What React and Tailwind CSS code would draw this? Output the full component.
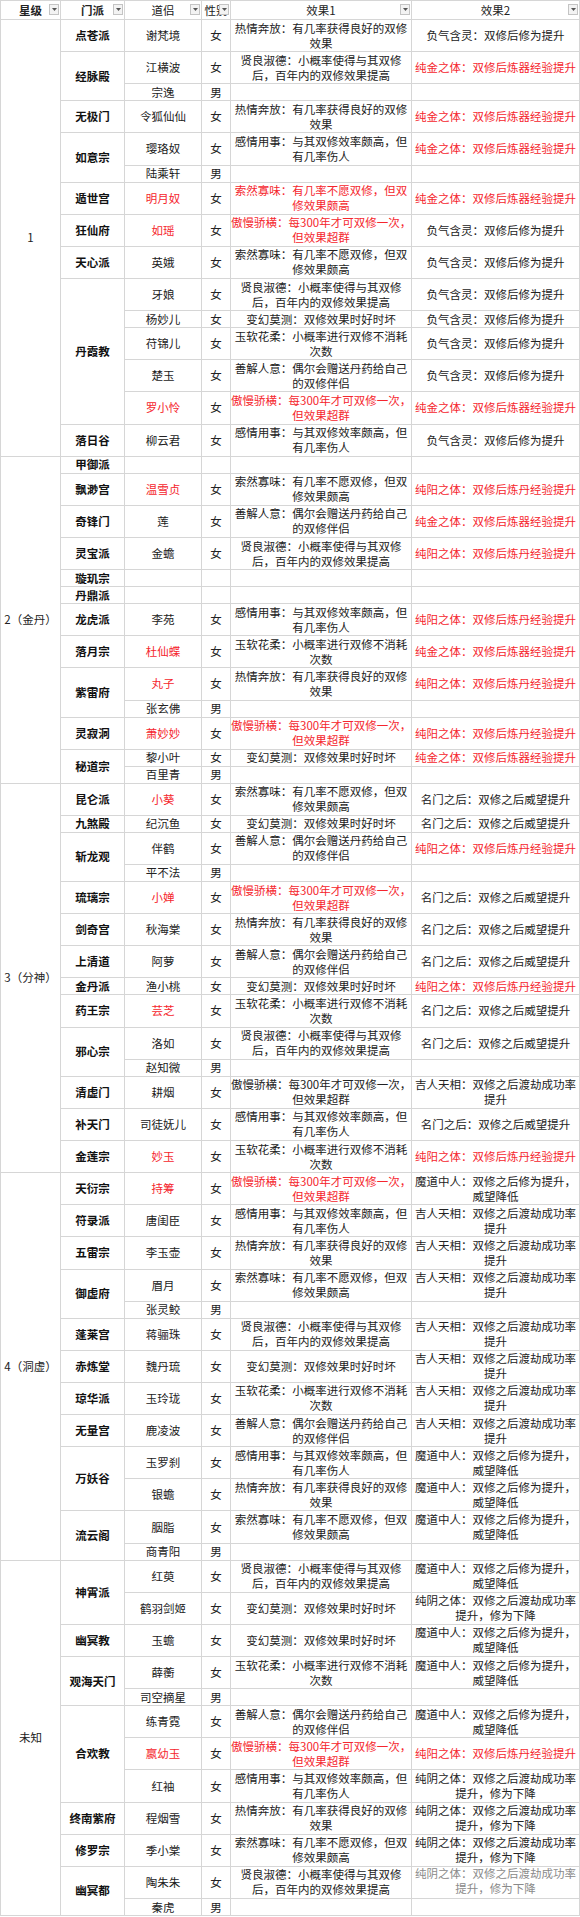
import React from 'react';

const E1 = {
  rq: ['热情奔放：有几率获得良好的双修', '效果'],
  xl: ['贤良淑德：小概率使得与其双修', '后，百年内的双修效果提高'],
  gq: ['感情用事：与其双修效率颇高，但', '有几率伤人'],
  sr: ['索然寡味：有几率不愿双修，但双', '修效果颇高'],
  am: ['傲慢骄横：每300年才可双修一次，', '但效果超群'],
  bh: ['变幻莫测：双修效果时好时坏'],
  yr: ['玉软花柔：小概率进行双修不消耗', '次数'],
  sj: ['善解人意：偶尔会赠送丹药给自己', '的双修伴侣'],
};
const E2 = {
  fq: { t: ['负气含灵：双修后修为提升'] },
  cj: { t: ['纯金之体：双修后炼器经验提升'], red: true },
  cy: { t: ['纯阳之体：双修后炼丹经验提升'], red: true },
  mm: { t: ['名门之后：双修之后威望提升'] },
  jr: { t: ['吉人天相：双修之后渡劫成功率', '提升'] },
  md: { t: ['魔道中人：双修之后修为提升，', '威望降低'] },
  cyin: { t: ['纯阴之体：双修之后渡劫成功率', '提升，修为下降'] },
};

const m = (n = '', g = '', e1 = null, e2 = null, f = '') => ({ n, g, e1, e2, f });

const TIERS = [
  {
    label: '1',
    sects: [
      ['点苍派', [m('谢梵境', '女', 'rq', 'fq')]],
      ['经脉殿', [m('江横波', '女', 'xl', 'cj'), m('宗逸', '男')]],
      ['无极门', [m('令狐仙仙', '女', 'rq', 'cj')]],
      ['如意宗', [m('璎珞奴', '女', 'gq', 'cj'), m('陆乘轩', '男')]],
      ['遁世宫', [m('明月奴', '女', 'sr', 'cj', 'ne')]],
      ['狂仙府', [m('如瑶', '女', 'am', 'fq', 'ne')]],
      ['天心派', [m('英娥', '女', 'sr', 'fq')]],
      ['丹霞教', [m('牙娘', '女', 'xl', 'fq'), m('杨妙儿', '女', 'bh', 'fq'), m('苻锦儿', '女', 'yr', 'fq'), m('楚玉', '女', 'sj', 'fq'), m('罗小怜', '女', 'am', 'cj', 'ne')]],
      ['落日谷', [m('柳云君', '女', 'gq', 'fq')]],
    ],
  },
  {
    label: '2（金丹）',
    sects: [
      ['甲御派', [m()]],
      ['飘渺宫', [m('温雪贞', '女', 'sr', 'cy', 'n')]],
      ['奇锋门', [m('莲', '女', 'sj', 'cj')]],
      ['灵宝派', [m('金蟾', '女', 'xl', 'cy')]],
      ['璇玑宗', [m()]],
      ['丹鼎派', [m()]],
      ['龙虎派', [m('李苑', '女', 'gq', 'cy')]],
      ['落月宗', [m('杜仙蝶', '女', 'yr', 'cj', 'n')]],
      ['紫雷府', [m('丸子', '女', 'rq', 'cy', 'n'), m('张玄佛', '男')]],
      ['灵寂洞', [m('萧妙妙', '女', 'am', 'cy', 'ne')]],
      ['秘道宗', [m('黎小叶', '女', 'bh', 'cj'), m('百里青', '男')]],
    ],
  },
  {
    label: '3（分神）',
    sects: [
      ['昆仑派', [m('小葵', '女', 'sr', 'mm', 'n')]],
      ['九煞殿', [m('纪沉鱼', '女', 'bh', 'mm')]],
      ['斩龙观', [m('伴鹤', '女', 'sj', 'cy'), m('平不法', '男')]],
      ['琉璃宗', [m('小婵', '女', 'am', 'mm', 'ne')]],
      ['剑奇宫', [m('秋海棠', '女', 'rq', 'mm')]],
      ['上清道', [m('阿萝', '女', 'sj', 'mm')]],
      ['金丹派', [m('渔小桃', '女', 'bh', 'cy')]],
      ['药王宗', [m('芸芝', '女', 'yr', 'mm', 'n')]],
      ['邪心宗', [m('洛如', '女', 'xl', 'mm'), m('赵知微', '男')]],
      ['清虚门', [m('耕烟', '女', 'am', 'jr')]],
      ['补天门', [m('司徒妩儿', '女', 'gq', 'mm')]],
      ['金莲宗', [m('妙玉', '女', 'yr', 'cy', 'n')]],
    ],
  },
  {
    label: '4（洞虚）',
    sects: [
      ['天衍宗', [m('持筹', '女', 'am', 'md', 'ne')]],
      ['符录派', [m('唐闺臣', '女', 'gq', 'jr')]],
      ['五雷宗', [m('李玉壶', '女', 'rq', 'jr')]],
      ['御虚府', [m('眉月', '女', 'sr', 'jr'), m('张灵鲛', '男')]],
      ['蓬莱宫', [m('蒋骊珠', '女', 'xl', 'jr')]],
      ['赤炼堂', [m('魏丹琉', '女', 'bh', 'jr')]],
      ['琼华派', [m('玉玲珑', '女', 'yr', 'jr')]],
      ['无量宫', [m('鹿凌波', '女', 'sj', 'jr')]],
      ['万妖谷', [m('玉罗刹', '女', 'gq', 'md'), m('银蟾', '女', 'rq', 'md')]],
      ['流云阁', [m('胭脂', '女', 'sr', 'md'), m('商青阳', '男')]],
    ],
  },
  {
    label: '未知',
    sects: [
      ['神霄派', [m('红萸', '女', 'xl', 'md'), m('鹤羽剑姬', '女', 'bh', 'cyin')]],
      ['幽冥教', [m('玉蟾', '女', 'bh', 'md')]],
      ['观海天门', [m('薛蘅', '女', 'yr', 'md'), m('司空摘星', '男')]],
      ['合欢教', [m('练青霓', '女', 'sj', 'md'), m('嬴幼玉', '女', 'am', 'cy', 'ne'), m('红袖', '女', 'gq', 'cyin')]],
      ['终南紫府', [m('程烟雪', '女', 'rq', 'cyin')]],
      ['修罗宗', [m('季小棠', '女', 'sr', 'cyin')]],
      ['幽冥都', [m('陶朱朱', '女', 'xl', 'cyin', 'g'), m('秦虎', '男')]],
    ],
  },
];

const RED = 'text-[#f5262d]';
const CELL = 'border border-[#d6d6d6] p-0 text-center align-middle whitespace-nowrap overflow-hidden leading-[15px]';

function Filter() {
  return (
    <span className="absolute right-[1px] top-[3px] flex h-[11px] w-[10px] items-center justify-center border border-[#c4c4c4] bg-[#f3f3f3]">
      <svg width="5" height="3" viewBox="0 0 5 3">
        <path d="M0 0H5L2.5 3Z" fill="#555" />
      </svg>
    </span>
  );
}

function Lines({ lines }) {
  return lines.map((l, i) => (
    <div key={i} className="leading-[15px]">
      {l}
    </div>
  ));
}

export default function App() {
  const rows = [];
  TIERS.forEach((tier, ti) => {
    const tierCount = tier.sects.reduce((a, s) => a + s[1].length, 0);
    tier.sects.forEach(([sect, members], si) => {
      members.forEach((mb, mi) => {
        const e1 = mb.e1 ? E1[mb.e1] : null;
        const e2 = mb.e2 ? E2[mb.e2] : null;
        const two = (e1 && e1.length > 1) || (e2 && e2.t.length > 1);
        rows.push(
          <tr key={`${ti}-${si}-${mi}`} className={two ? 'h-[32.15px]' : 'h-[17px]'}>
            {si === 0 && mi === 0 && (
              <td rowSpan={tierCount} className={CELL + ' font-normal'}>
                {tier.label}
              </td>
            )}
            {mi === 0 && (
              <td rowSpan={members.length} className={CELL + ' font-bold text-[#111]'}>
                {sect}
              </td>
            )}
            <td className={CELL + (mb.f.includes('n') ? ' ' + RED : '')}>{mb.n}</td>
            <td className={CELL}>{mb.g}</td>
            <td className={CELL + (mb.f.includes('e') ? ' ' + RED : '')}>{e1 && <Lines lines={e1} />}</td>
            <td
              className={
                CELL +
                (e2 && e2.red ? ' ' + RED : '') +
                (mb.f.includes('g') ? " text-[#8a8a8a] font-['Liberation_Serif','Noto_Sans_CJK_SC',serif]" : '')
              }
            >
              {e2 && <Lines lines={e2.t} />}
            </td>
          </tr>
        );
      });
    });
  });

  return (
    <div className="w-[580px] bg-white font-['Noto_Sans_CJK_SC','Microsoft_YaHei',sans-serif] text-[11.5px] leading-[15px] text-[#222]">
      <table className="w-[579px] table-fixed border-collapse">
        <colgroup>
          <col className="w-[60px]" />
          <col className="w-[64px]" />
          <col className="w-[77px]" />
          <col className="w-[29px]" />
          <col className="w-[181px]" />
          <col className="w-[168px]" />
        </colgroup>
        <thead>
          <tr className="h-[19px]">
            <th className={CELL + ' relative font-bold'}>星级<Filter /></th>
            <th className={CELL + ' relative font-bold'}>门派<Filter /></th>
            <th className={CELL + ' relative font-normal'}>道侣<Filter /></th>
            <th className={CELL + ' relative font-normal'}>性别<Filter /></th>
            <th className={CELL + ' relative font-normal'}>效果1<Filter /></th>
            <th className={CELL + ' relative font-normal'}>效果2<Filter /></th>
          </tr>
        </thead>
        <tbody>{rows}</tbody>
      </table>
    </div>
  );
}
